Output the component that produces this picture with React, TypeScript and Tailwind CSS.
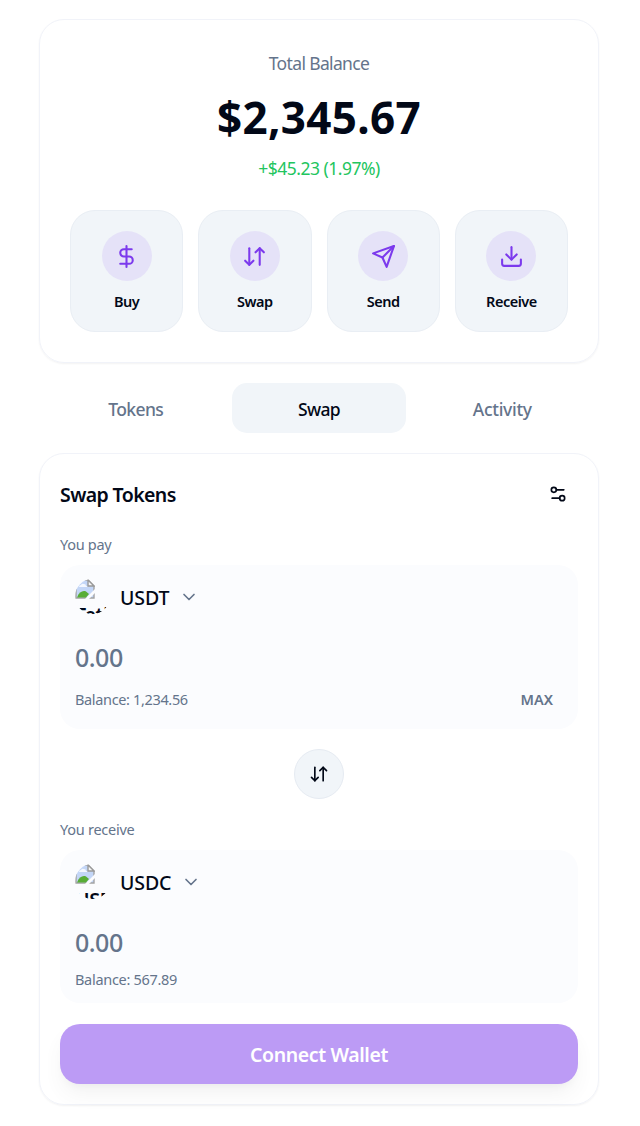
import React from "react";
import { ArrowDownUp, ChevronDown, DollarSign, Download, Settings2 } from "lucide-react";

function SendIcon({ className }: { className?: string }) {
  return (
    <svg viewBox="0 0 24 24" fill="none" stroke="currentColor" strokeWidth="2" strokeLinecap="round" strokeLinejoin="round" className={className}>
      <path d="m22 2-7 20-4-9-9-4Z" />
      <path d="M22 2 11 13" />
    </svg>
  );
}

function BrokenImage({ alt }: { alt: string }) {
  return (
    <div className="relative h-[35px] w-[35px] shrink-0 overflow-hidden rounded-full">
      <svg viewBox="0 0 20 20" className="block h-5 w-5">
        <path d="M1 1H13L19 7V19H1Z" fill="#c3d6f7" stroke="#a3a3a3" strokeWidth="1.4" />
        <path d="M4 8q0-2 2-2q1-2 3-1q2 0 2 2q2 0 2 1Z" fill="#f4f8ff" />
        <path d="M2 18.4C4 13 8 11 11 12.5L14 15L11 18.4Z" fill="#58ad36" />
        <path d="M10 20L20 10V14L14 20Z" fill="#fbfcfe" />
        <path d="M13 1V7H19Z" fill="#f6f6f6" stroke="#999" strokeWidth="1.4" />
      </svg>
      <span className="absolute left-0 top-[22px] whitespace-nowrap text-[19.5px] font-semibold leading-[27px] tracking-[-0.3px]">{alt}</span>
    </div>
  );
}

const actions = [
  { label: "Buy", Icon: DollarSign },
  { label: "Swap", Icon: ArrowDownUp },
  { label: "Send", Icon: SendIcon },
  { label: "Receive", Icon: Download },
];

function TokenRow({ symbol, alt }: { symbol: string; alt: string }) {
  return (
    <div className="flex h-[35px] items-center gap-[10px]">
      <BrokenImage alt={alt} />
      <span className="pt-[2px] text-[19.5px] font-medium leading-[30px] tracking-[-0.1px]">{symbol}</span>
      <ChevronDown className="h-5 w-5 text-[#64748b]" />
    </div>
  );
}

export default function App() {
  return (
    <div className="min-h-[1126px] bg-white pl-[39px] pr-[41px] pt-[19px] font-['Noto_Sans',sans-serif] text-[#020817]">
      <section className="flex h-[344px] flex-col rounded-[25px] border border-[#f1f3f9] px-[30px] shadow-[0_1px_2px_0_rgb(0_0_0/0.05)]">
        <div className="mt-[31px] text-center text-[17.5px] leading-[25px] tracking-[-0.65px] text-[#64748b]">Total Balance</div>
        <div className="mt-[16px] text-center text-[44px] font-bold leading-[50px] tracking-[0.35px]">$2,345.67</div>
        <div className="mt-[14px] text-center text-[17.5px] leading-[25px] tracking-[-0.5px] text-[#22c55e]">+$45.23 (1.97%)</div>
        <div className="mt-[29px] grid grid-cols-4 gap-[15px]">
          {actions.map(({ label, Icon }) => (
            <button key={label} className="flex h-[122px] flex-col items-center rounded-[25px] border border-[#e9eef4] bg-[#f1f5f9] pt-5">
              <span className="flex h-[50px] w-[50px] items-center justify-center rounded-full bg-[#e5e2f8] text-[#7c3aed]">
                <Icon className="h-[25px] w-[25px]" />
              </span>
              <span className="mt-[10px] text-[14.5px] font-semibold leading-5 tracking-[-0.5px]">{label}</span>
            </button>
          ))}
        </div>
      </section>

      <nav className="mt-5 grid h-[50px] grid-cols-3 gap-[10px] px-[10px] text-[17.5px] font-medium tracking-[-0.6px] text-[#64748b]">
        <button className="rounded-[15px] pt-[3px]">Tokens</button>
        <button className="rounded-[15px] bg-[#f1f5f9] pt-[3px] text-[#020817]">Swap</button>
        <button className="rounded-[15px] pt-[3px] tracking-[-0.3px]">Activity</button>
      </nav>

      <section className="mt-5 h-[652px] rounded-[25px] border border-[#f1f3f9] px-5 pt-5 shadow-[0_1px_2px_0_rgb(0_0_0/0.05)]">
        <header className="flex h-10 items-center justify-between">
          <h2 className="pt-[2px] text-[19.5px] font-semibold tracking-[-0.6px]">Swap Tokens</h2>
          <button className="flex h-10 w-10 items-center justify-center">
            <Settings2 className="h-5 w-5" />
          </button>
        </header>
        <div className="mt-5 text-[14.5px] leading-5 tracking-[-0.3px] text-[#64748b]">You pay</div>
        <div className="mt-[11px] h-[164px] rounded-[20px] bg-[#fbfcfe] px-[15px] pt-[14px]">
          <TokenRow symbol="USDT" alt="Tether" />
          <div className="mt-[24px] text-[25px] font-medium leading-[38px] tracking-[-0.5px] text-[#64748b]">0.00</div>
          <div className="mt-[13px] flex items-center justify-between text-[#64748b]">
            <span className="text-[14.5px] leading-5 tracking-[-0.35px]">Balance: 1,234.56</span>
            <button className="mr-[10px] text-[14.5px] font-semibold leading-5">MAX</button>
          </div>
        </div>
        <div className="mt-5 flex justify-center">
          <button className="flex h-[50px] w-[50px] items-center justify-center rounded-full border border-[#e6ebf2] bg-[#f1f5f9]">
            <ArrowDownUp className="h-5 w-5" />
          </button>
        </div>
        <div className="mt-5 text-[14.5px] leading-5 tracking-[-0.25px] text-[#64748b]">You receive</div>
        <div className="mt-[11px] h-[153px] rounded-[20px] bg-[#fbfcfe] px-[15px] pt-[14px]">
          <TokenRow symbol="USDC" alt="USD" />
          <div className="mt-[24px] text-[25px] font-medium leading-[38px] tracking-[-0.5px] text-[#64748b]">0.00</div>
          <div className="mt-[8px] text-[14.5px] leading-5 tracking-[-0.3px] text-[#64748b]">Balance: 567.89</div>
        </div>
        <button className="mt-[21px] h-[60px] w-full rounded-[20px] bg-[#7c3aed] pt-[2px] text-[19.5px] font-semibold tracking-[-0.4px] text-white opacity-50 shadow-[0_12px_19px_-4px_rgb(0_0_0/0.1),0_5px_8px_-5px_rgb(0_0_0/0.1)]">
          Connect Wallet
        </button>
      </section>
    </div>
  );
}
